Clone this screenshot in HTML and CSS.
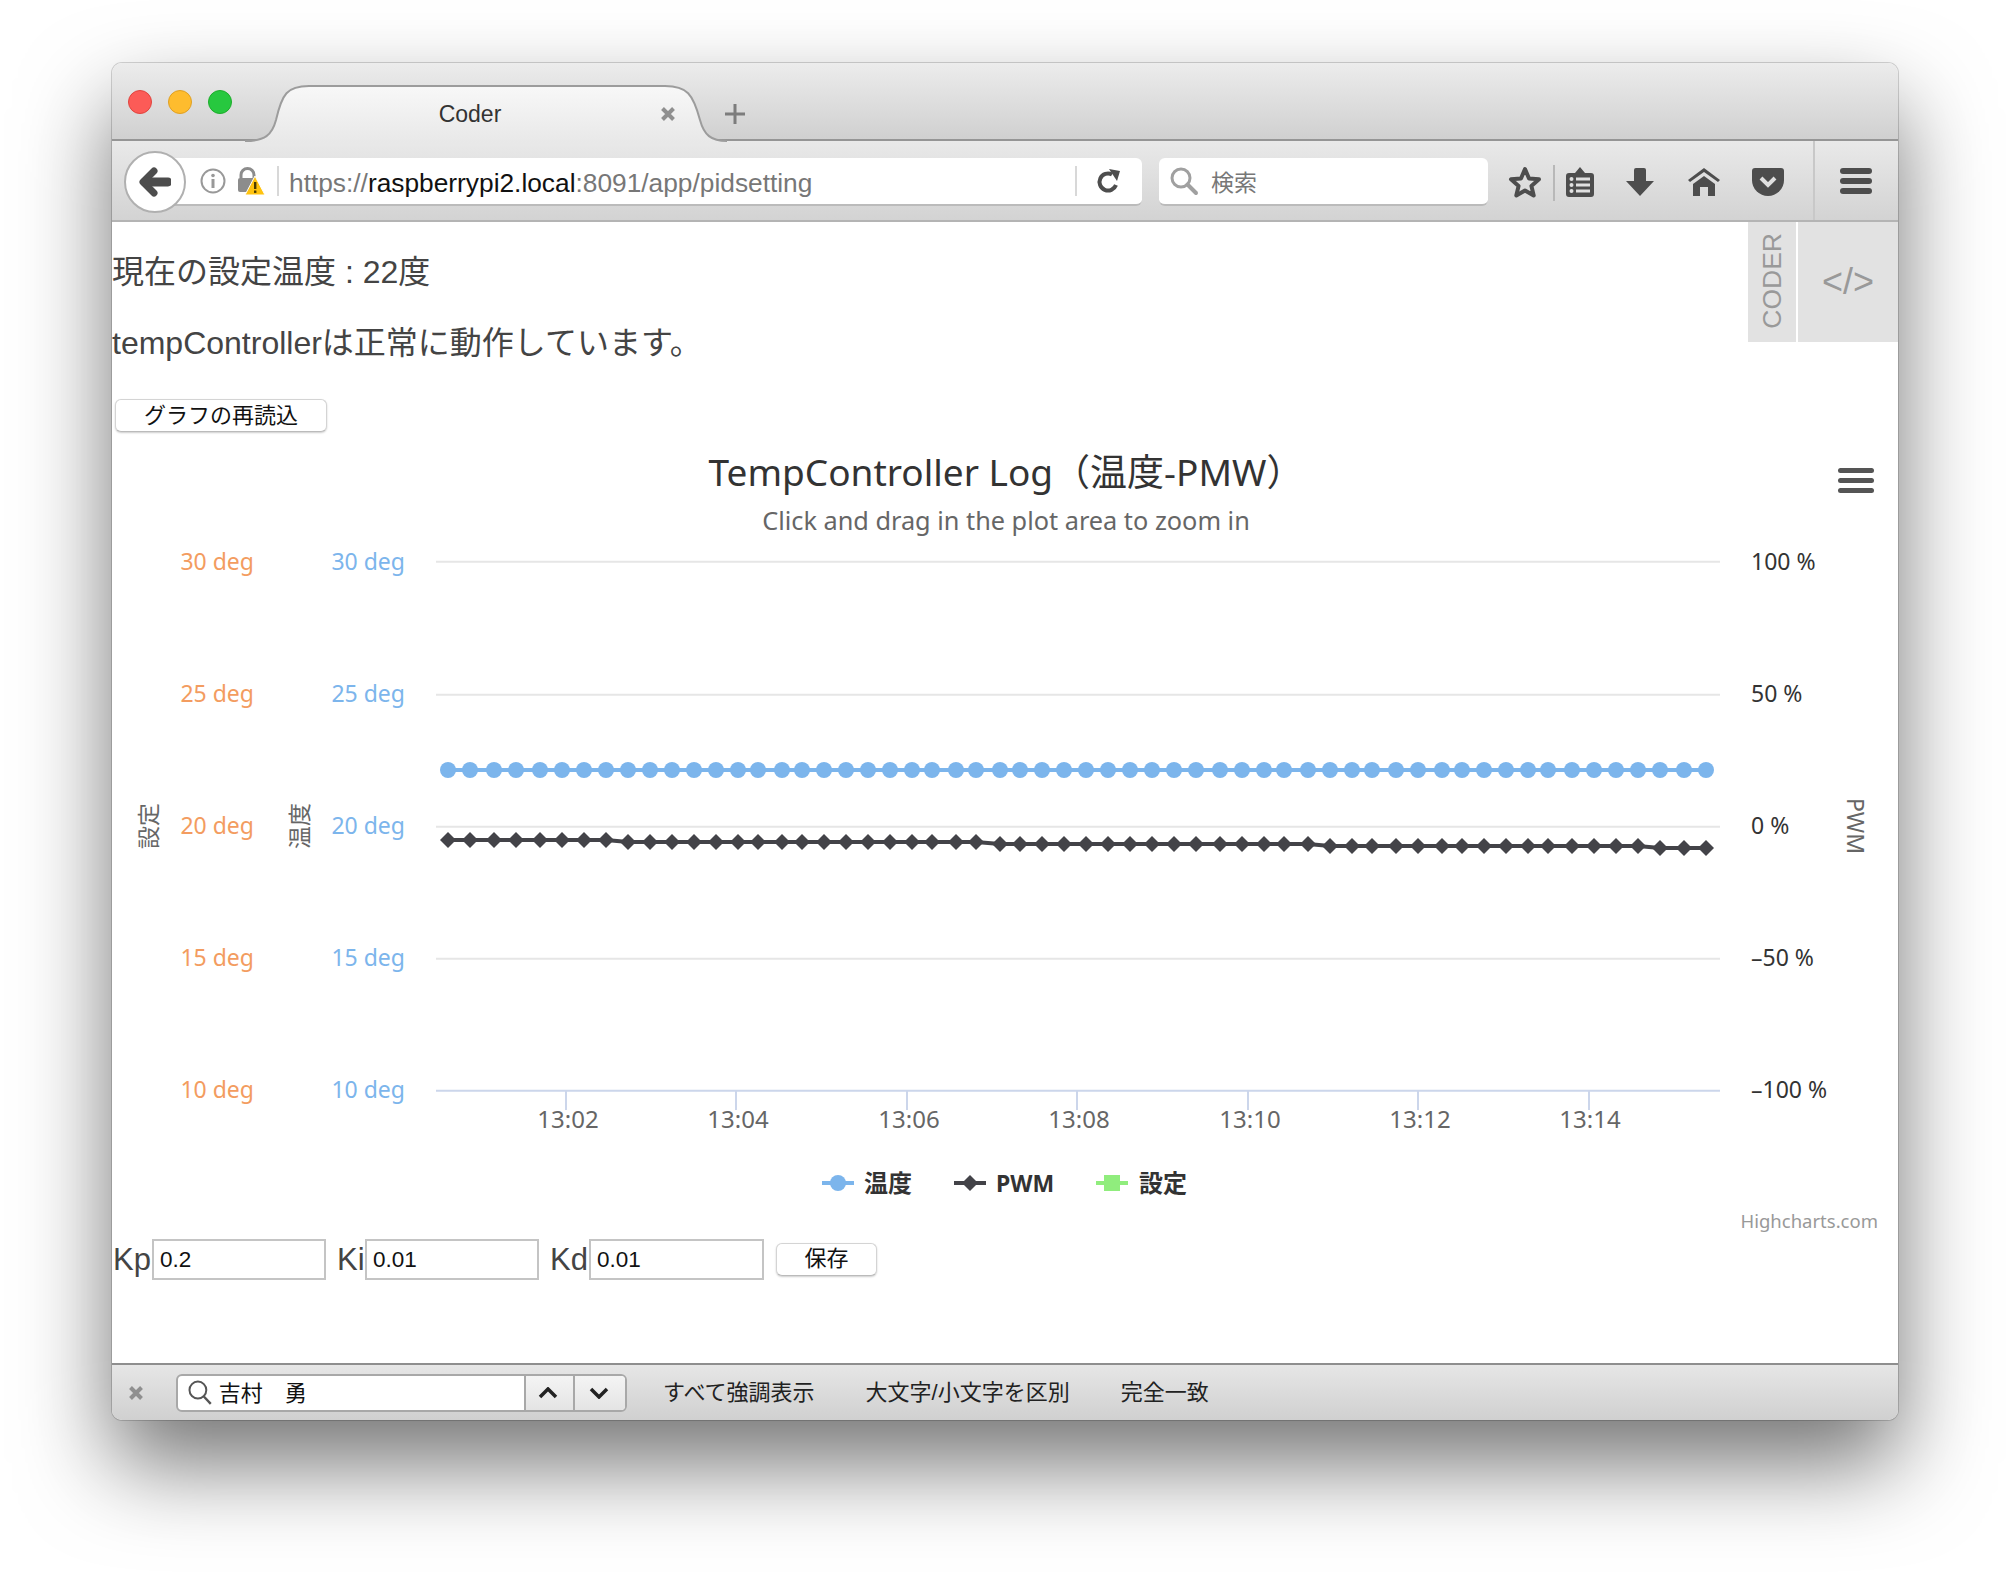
FILE: index.html
```html
<!DOCTYPE html>
<html lang="ja">
<head>
  <meta charset="UTF-8">
  <title>Coder</title>
  <link rel="stylesheet" href="styles.css">
</head>
<body>
<div class="window">

  <!-- TABS -->
  <div class="tabstrip">
    <span class="light red"></span>
    <span class="light yellow"></span>
    <span class="light green"></span>
    <div class="tab">
      <svg class="tab-shape" width="482" height="58" viewBox="0 0 482 58">
        <defs>
          <linearGradient id="tabfill" x1="0" y1="0" x2="0" y2="1">
            <stop offset="0" stop-color="#f8f8f8"/>
            <stop offset="1" stop-color="#e8e8e8"/>
          </linearGradient>
        </defs>
        <path d="M0 58 V56 C20 56 27 50 31 35 C37 9 42 1 64 1 H420 C442 1 448 9 455 35 C459 50 466 56 482 56 V58 Z" fill="url(#tabfill)"/>
        <path d="M0 56 C20 56 27 50 31 35 C37 9 42 1 64 1 H420 C442 1 448 9 455 35 C459 50 466 56 482 56" fill="none" stroke="#9c9c9c" stroke-width="2"/>
      </svg>
      <span class="tab-title">Coder</span>
      <svg class="tab-close" width="16" height="16" viewBox="0 0 16 16"><path d="M2.5 2.5 L13.5 13.5 M13.5 2.5 L2.5 13.5" stroke="#8f8f8f" stroke-width="4"/></svg>
    </div>
    <svg class="tab-new" width="22" height="22" viewBox="0 0 22 22"><path d="M11 1 V21 M1 11 H21" stroke="#7d7d7d" stroke-width="3"/></svg>
  </div>

  <!-- TOOLBAR -->
  <div class="toolbar">
    <div class="back">
      <svg width="32" height="30" viewBox="0 0 32 30"><path d="M15 4 L4 15 L15 26" fill="none" stroke="#4d4d4d" stroke-width="7" stroke-linecap="round" stroke-linejoin="round"/><path d="M6 15 H29" stroke="#4d4d4d" stroke-width="9" stroke-linecap="round"/></svg>
    </div>
    <div class="urlbar">
      <svg class="url-info" width="26" height="26" viewBox="0 0 26 26"><circle cx="13" cy="13" r="11.5" fill="none" stroke="#999" stroke-width="2"/><circle cx="13" cy="7.5" r="1.8" fill="#999"/><rect x="11.5" y="11" width="3" height="9" fill="#999"/></svg>
      <svg class="url-lock" width="30" height="30" viewBox="0 0 30 30">
        <path d="M5 11 V8 A6.5 6.5 0 0 1 18 8 V11" fill="none" stroke="#8c8c8c" stroke-width="3"/>
        <rect x="2" y="11" width="18" height="14" rx="2" fill="#8c8c8c"/>
        <path d="M19 9 L29 28 H9 Z" fill="#ffc30f" stroke="#fff" stroke-width="1"/>
        <rect x="18" y="15" width="2.4" height="7" fill="#4a3b00"/>
        <rect x="18" y="23.5" width="2.4" height="2.4" fill="#4a3b00"/>
      </svg>
      <span class="url-sep"></span>
      <span class="url-text">https://<b>raspberrypi2.local</b>:8091/app/pidsetting</span>
      <span class="url-sep reload-sep"></span>
      <svg class="url-reload" width="26" height="26" viewBox="0 0 26 26"><path d="M20 17 A8.5 8.5 0 1 1 16 6.5" fill="none" stroke="#4d4d4d" stroke-width="4"/><path d="M13 1 L24 3 L21 13 Z" fill="#4d4d4d"/></svg>
    </div>
    <div class="searchbar">
      <svg width="30" height="30" viewBox="0 0 30 30"><circle cx="12" cy="12" r="9" fill="none" stroke="#a0a0a0" stroke-width="3"/><path d="M18.5 18.5 L27 27" stroke="#a0a0a0" stroke-width="4" stroke-linecap="round"/></svg>
      <span>検索</span>
    </div>
    <svg class="ic-star" width="34" height="32" viewBox="0 0 34 32"><path d="M17 3 L21 12.5 L31 13.3 L23.4 19.9 L25.7 29.5 L17 24.4 L8.3 29.5 L10.6 19.9 L3 13.3 L13 12.5 Z" fill="none" stroke="#4d4d4d" stroke-width="4" stroke-linejoin="round"/></svg>
    <span class="tool-sep"></span>
    <svg class="ic-list" width="28" height="30" viewBox="0 0 28 30"><path d="M3 6 H9 L14 0 L19 6 H25 A3 3 0 0 1 28 9 V27 A3 3 0 0 1 25 30 H3 A3 3 0 0 1 0 27 V9 A3 3 0 0 1 3 6 Z" fill="#4d4d4d"/><g fill="#e0e0e0"><circle cx="5.5" cy="12" r="2"/><circle cx="5.5" cy="18" r="2"/><circle cx="5.5" cy="24" r="2"/><rect x="10" y="10.5" width="14" height="3"/><rect x="10" y="16.5" width="14" height="3"/><rect x="10" y="22.5" width="14" height="3"/></g></svg>
    <svg class="ic-down" width="28" height="28" viewBox="0 0 28 28"><path d="M8 2 A2 2 0 0 1 10 0 H18 A2 2 0 0 1 20 2 V13 H28 L14 28 L0 13 H8 Z" fill="#4d4d4d"/></svg>
    <svg class="ic-home" width="32" height="28" viewBox="0 0 32 28"><path d="M0 12 L16 0 L32 12 L30 14 L16 4 L2 14 Z" fill="#4d4d4d"/><path d="M16 8 L27 16 V28 H20 V19 H12 V28 H5 V16 Z" fill="#4d4d4d"/></svg>
    <svg class="ic-pocket" width="32" height="28" viewBox="0 0 32 28"><path d="M3 0 H29 A3 3 0 0 1 32 3 V12 A16 16 0 0 1 0 12 V3 A3 3 0 0 1 3 0 Z" fill="#4d4d4d"/><path d="M9 10 L16 17 L23 10" fill="none" stroke="#e0e0e0" stroke-width="4"/></svg>
    <span class="tool-sep tall"></span>
    <div class="ic-menu"><i></i><i></i><i></i></div>
  </div>

  <!-- PAGE -->
  <div class="page">
    <div class="coder-tab">
      <div class="coder-label"><span>CODER</span></div>
      <div class="coder-mark">&lt;/&gt;</div>
    </div>

    <p class="status">現在の設定温度 : 22度</p>
    <p class="status second">tempControllerは正常に動作しています。</p>
    <button class="btn reload-btn">グラフの再読込</button>

    <svg id="chart" class="chart" width="1787" height="807" viewBox="112 432 1787 807">
      <text class="title" x="1006" y="486">TempController Log（温度-PMW）</text>
      <text class="subtitle" x="1006" y="530">Click and drag in the plot area to zoom in</text>
      <g fill="#555"><rect x="1838" y="468" width="36" height="5" rx="2.5"/><rect x="1838" y="478" width="36" height="5" rx="2.5"/><rect x="1838" y="488" width="36" height="5" rx="2.5"/></g>

      <g stroke="#e6e6e6" stroke-width="2">
        <path d="M436 561.7 H1720"/>
        <path d="M436 694.7 H1720"/>
        <path d="M436 826.7 H1720"/>
        <path d="M436 958.7 H1720"/>
      </g>
      <path d="M436 1090.7 H1720 M566 1091 V1110 M736 1091 V1110 M907 1091 V1110 M1077 1091 V1110 M1248 1091 V1110 M1418 1091 V1110 M1589 1091 V1110" stroke="#ccd6eb" stroke-width="2" fill="none"/>

      <g class="axis orange">
        <text x="254" y="570">30 deg</text><text x="254" y="702">25 deg</text><text x="254" y="834">20 deg</text><text x="254" y="966">15 deg</text><text x="254" y="1098">10 deg</text>
      </g>
      <g class="axis blue">
        <text x="405" y="570">30 deg</text><text x="405" y="702">25 deg</text><text x="405" y="834">20 deg</text><text x="405" y="966">15 deg</text><text x="405" y="1098">10 deg</text>
      </g>
      <g class="axis right">
        <text x="1751" y="570">100 %</text><text x="1751" y="702">50 %</text><text x="1751" y="834">0 %</text><text x="1751" y="966">–50 %</text><text x="1751" y="1098">–100 %</text>
      </g>
      <g class="axis ticks">
        <text x="568" y="1128">13:02</text><text x="738" y="1128">13:04</text><text x="909" y="1128">13:06</text><text x="1079" y="1128">13:08</text><text x="1250" y="1128">13:10</text><text x="1420" y="1128">13:12</text><text x="1590" y="1128">13:14</text>
      </g>
      <text class="axis-title" transform="translate(157 826) rotate(-90)">設定</text>
      <text class="axis-title" transform="translate(308 826) rotate(-90)">温度</text>
      <text class="axis-title" transform="translate(1847 826) rotate(90)">PWM</text>

      <g id="series"></g>

      <path d="M822 1183 H854" stroke="#7cb5ec" stroke-width="4"/><circle cx="838" cy="1183" r="8" fill="#7cb5ec"/>
      <text class="legend" x="864" y="1192">温度</text>
      <path d="M954 1183 H986" stroke="#434348" stroke-width="4"/><path d="M970 1175 L978 1183 L970 1191 L962 1183 Z" fill="#434348"/>
      <text class="legend pwm" x="996" y="1192">PWM</text>
      <path d="M1096 1183 H1128" stroke="#90ed7d" stroke-width="4"/><rect x="1104" y="1175" width="16" height="16" fill="#90ed7d"/>
      <text class="legend" x="1139" y="1192">設定</text>

      <text class="credits" x="1878" y="1228">Highcharts.com</text>
    </svg>

    <div class="gains">
      <label>Kp</label><input type="text" value="0.2">
      <label class="next">Ki</label><input type="text" value="0.01">
      <label class="next">Kd</label><input type="text" value="0.01">
      <button class="btn save-btn">保存</button>
    </div>
  </div>

  <!-- FIND BAR -->
  <div class="findbar">
    <svg class="find-close" width="16" height="16" viewBox="0 0 16 16"><path d="M2.5 2.5 L13.5 13.5 M13.5 2.5 L2.5 13.5" stroke="#8f8f8f" stroke-width="4"/></svg>
    <div class="find-box">
      <svg width="26" height="26" viewBox="0 0 26 26"><circle cx="11" cy="10" r="8.5" fill="none" stroke="#555" stroke-width="2"/><path d="M17 16.5 L24 24" stroke="#555" stroke-width="2.4"/></svg>
      <span class="find-text">吉村　勇</span>
      <span class="find-arrow"><svg width="20" height="12" viewBox="0 0 20 12"><path d="M2 10 L10 2 L18 10" fill="none" stroke="#222" stroke-width="3.5"/></svg></span>
      <span class="find-arrow last"><svg width="20" height="12" viewBox="0 0 20 12"><path d="M2 2 L10 10 L18 2" fill="none" stroke="#222" stroke-width="3.5"/></svg></span>
    </div>
    <span class="find-opt first">すべて強調表示</span>
    <span class="find-opt">大文字/小文字を区別</span>
    <span class="find-opt">完全一致</span>
  </div>
</div>

<script>
  // series points measured from the plot
  const xs = [448,470,494,516,540,562,584,606,628,650,672,694,716,738,758,782,802,824,846,868,890,912,932,
    956,976,1000,1020,1042,1064,1086,1108,1130,1152,1174,1196,1220,1242,1264,1284,1308,1330,1352,1372,1396,1418,
    1442,1462,1484,1506,1528,1548,1572,1594,1616,1638,1660,1684,1706];

  function pwmY(i) {
    if (i < 8) return 840;
    if (i < 25) return 842;
    if (i < 40) return 844;
    if (i < 55) return 846;
    return 848;
  }

  const NS = "http://www.w3.org/2000/svg";
  const group = document.getElementById("series");

  function add(tag, attrs) {
    const el = document.createElementNS(NS, tag);
    for (const k in attrs) el.setAttribute(k, attrs[k]);
    group.appendChild(el);
  }

  add("path", {d: "M" + xs.map(x => x + " 770").join(" L"), fill: "none", stroke: "#7cb5ec", "stroke-width": 4});
  add("path", {d: "M" + xs.map((x, i) => x + " " + pwmY(i)).join(" L"), fill: "none", stroke: "#434348", "stroke-width": 4});

  xs.forEach((x, i) => {
    add("circle", {cx: x, cy: 770, r: 8, fill: "#7cb5ec"});
    const y = pwmY(i);
    add("path", {d: `M${x} ${y - 8} L${x + 8} ${y} L${x} ${y + 8} L${x - 8} ${y} Z`, fill: "#434348"});
  });
</script>
</body>
</html>
```

FILE: styles.css
```css
* {
  box-sizing: border-box;
}
html, body {
  height: 1580px;
}
body {
  margin: 0;
  padding: 63px 0 0 112px;
  background: #fff;
  overflow: hidden;
  font-family: "Liberation Sans", "Noto Sans CJK JP", sans-serif;
}
.window {
  width: 1786px;
  height: 1357px;
  display: flex;
  flex-direction: column;
  border-radius: 10px;
  box-shadow: 0 0 0 1px rgba(0, 0, 0, 0.16), 0 44px 90px rgba(0, 0, 0, 0.55);
}

/* tabs */
.tabstrip {
  height: 78px;
  flex: none;
  display: flex;
  align-items: flex-start;
  padding: 27px 0 0 16px;
  background: linear-gradient(#ececec, #d0d0d0);
  border-bottom: 2px solid #959595;
  border-radius: 10px 10px 0 0;
}
.light {
  width: 24px;
  height: 24px;
  border-radius: 50%;
  margin-right: 16px;
}
.red { background: #fc5b57; border: 1px solid #e0443e; }
.yellow { background: #febc2e; border: 1px solid #dfa023; }
.green { background: #27c83f; border: 1px solid #1dad2b; }
.tab {
  position: relative;
  width: 482px;
  height: 58px;
  margin: -5px 0 0 -3px;
  padding-left: 108px;
  display: flex;
  align-items: center;
  color: #333;
  font-size: 23px;
}
.tab-shape {
  position: absolute;
  left: 0;
  top: 0;
}
.tab-title {
  position: relative;
  width: 234px;
  text-align: center;
  margin-top: 1px;
}
.tab-close {
  position: relative;
  margin: -1px 0 0 73px;
}
.tab-new {
  margin: 13px 0 0 -3px;
}

/* toolbar */
.toolbar {
  height: 81px;
  flex: none;
  display: flex;
  align-items: flex-start;
  padding: 17px 0 0 12px;
  background: linear-gradient(#e9e9e9, #d3d3d3);
  border-bottom: 2px solid #b4b4b4;
}
.back {
  position: relative;
  z-index: 1;
  width: 62px;
  height: 62px;
  margin-top: -7px;
  flex: none;
  display: flex;
  align-items: center;
  justify-content: center;
  background: #fff;
  border: 2px solid #b0b0b0;
  border-radius: 50%;
}
.urlbar {
  width: 972px;
  height: 48px;
  margin-left: -16px;
  flex: none;
  display: flex;
  align-items: center;
  background: #fff;
  border-bottom: 2px solid #bbb;
  border-radius: 0 6px 6px 0;
}
.url-info {
  margin-left: 30px;
}
.url-lock {
  margin-left: 10px;
  margin-top: 2px;
}
.url-sep {
  width: 2px;
  height: 30px;
  margin-left: 11px;
  background: #d8d8d8;
}
.url-text {
  margin: 5px 0 0 10px;
  width: 786px;
  font-size: 26.3px;
  color: #777;
  white-space: nowrap;
}
.url-text b {
  font-weight: normal;
  color: #111;
}
.reload-sep {
  margin-left: 0;
}
.url-reload {
  margin-left: 19px;
}
.searchbar {
  width: 329px;
  height: 48px;
  margin-left: 17px;
  flex: none;
  display: flex;
  align-items: center;
  padding-left: 10px;
  background: #fff;
  border-bottom: 2px solid #bbb;
  border-radius: 6px;
  color: #777;
  font-size: 23px;
}
.searchbar span {
  margin-left: 12px;
}
.toolbar svg {
  flex: none;
}
.ic-star { margin: 8px 0 0 20px; }
.tool-sep {
  width: 2px;
  height: 36px;
  margin: 7px 0 0 11px;
  background: #b8b8b8;
  flex: none;
}
.tool-sep.tall {
  height: 79px;
  margin: -17px 0 0 29px;
  background: #c8c8c8;
}
.ic-list { margin: 9px 0 0 11px; }
.ic-down { margin: 10px 0 0 32px; }
.ic-home { margin: 10px 0 0 34px; }
.ic-pocket { margin: 10px 0 0 32px; }
.ic-menu {
  width: 32px;
  margin: 10px 0 0 25px;
  flex: none;
}
.ic-menu i {
  display: block;
  height: 6px;
  margin-bottom: 4px;
  background: #4d4d4d;
  border-radius: 3px;
}

/* page */
.page {
  position: relative;
  flex: 1;
  background: #fff;
  overflow: hidden;
}
.coder-tab {
  position: absolute;
  top: 0;
  right: 0;
  display: flex;
  gap: 2px;
  height: 120px;
}
.coder-label {
  width: 48px;
  padding-bottom: 2px;
  background: #e2e2e2;
  display: flex;
  align-items: center;
  justify-content: center;
}
.coder-label span {
  writing-mode: vertical-rl;
  transform: rotate(180deg);
  color: #999;
  font-size: 26.5px;
}
.coder-mark {
  width: 100px;
  background: #e2e2e2;
  color: #999;
  font-size: 36px;
  display: flex;
  align-items: center;
  justify-content: center;
}
.status {
  margin: 32px 0 0;
  font-size: 32px;
  line-height: 36px;
  color: #444;
}
.status.second {
  margin-top: 35px;
}
.btn {
  display: block;
  padding: 0;
  background: #fff;
  border: 1px solid #d4d4d4;
  border-bottom-color: #bbb;
  border-radius: 6px;
  box-shadow: 0 1px 2px rgba(0, 0, 0, 0.2);
  color: #111;
  font-family: inherit;
  font-size: 22px;
  line-height: 22px;
}
.reload-btn {
  width: 212px;
  height: 33px;
  margin: 38px 0 0 3px;
}
.chart {
  display: block;
  font-family: "Noto Sans", "Noto Sans CJK JP", sans-serif;
}
.title {
  font-size: 37px;
  fill: #333;
  text-anchor: middle;
}
.subtitle {
  font-size: 25.3px;
  fill: #666;
  text-anchor: middle;
}
.axis {
  font-size: 23px;
}
.orange { fill: #f39c60; text-anchor: end; }
.blue { fill: #7cb5ec; text-anchor: end; }
.right { fill: #333; }
.ticks { fill: #666; text-anchor: middle; font-size: 24px; }
.axis-title {
  font-size: 23px;
  fill: #666;
  text-anchor: middle;
}
.legend {
  font-size: 24px;
  font-weight: bold;
  fill: #333;
}
.legend.pwm {
  font-size: 23px;
}
.credits {
  font-size: 18.5px;
  fill: #999;
  text-anchor: end;
}
.gains {
  display: flex;
  align-items: center;
  height: 41px;
  padding-left: 1px;
  color: #444;
  font-size: 31px;
}
.gains label {
  width: 39px;
}
.gains label.next {
  margin-left: 11px;
}
.gains label.next:nth-of-type(2) {
  width: 28px;
}
.gains input {
  width: 174px;
  height: 41px;
  padding: 1px 6px 0;
  border: 2px solid #c4c4c4;
  border-radius: 0;
  outline: none;
  color: #111;
  font-family: inherit;
  font-size: 22.5px;
}
.gains input:last-of-type {
  width: 175px;
}
.save-btn {
  width: 101px;
  height: 33px;
  margin: -1px 0 0 12px;
}

/* find bar */
.findbar {
  height: 57px;
  flex: none;
  display: flex;
  align-items: center;
  background: linear-gradient(#e6e6e6, #d0d0d0);
  border-top: 2px solid #8e8e8e;
  border-radius: 0 0 10px 10px;
  font-size: 22px;
  color: #222;
}
.find-close {
  margin-left: 16px;
}
.find-box {
  width: 451px;
  height: 38px;
  margin-left: 32px;
  display: flex;
  align-items: center;
  padding-left: 9px;
  background: #fff;
  border: 2px solid #a8a8a8;
  border-radius: 6px;
  color: #111;
}
.find-text {
  width: 308px;
  margin-left: 6px;
  padding-bottom: 3px;
}
.find-arrow {
  width: 50px;
  height: 100%;
  padding-right: 3px;
  display: flex;
  align-items: center;
  justify-content: center;
  background: linear-gradient(#f4f4f4, #e4e4e4);
  border-left: 2px solid #a8a8a8;
}
.find-arrow.last {
  width: 52px;
  border-radius: 0 4px 4px 0;
}
.find-opt {
  margin-left: 51px;
  padding-bottom: 5px;
}
.find-opt.first {
  margin-left: 36px;
}
```
